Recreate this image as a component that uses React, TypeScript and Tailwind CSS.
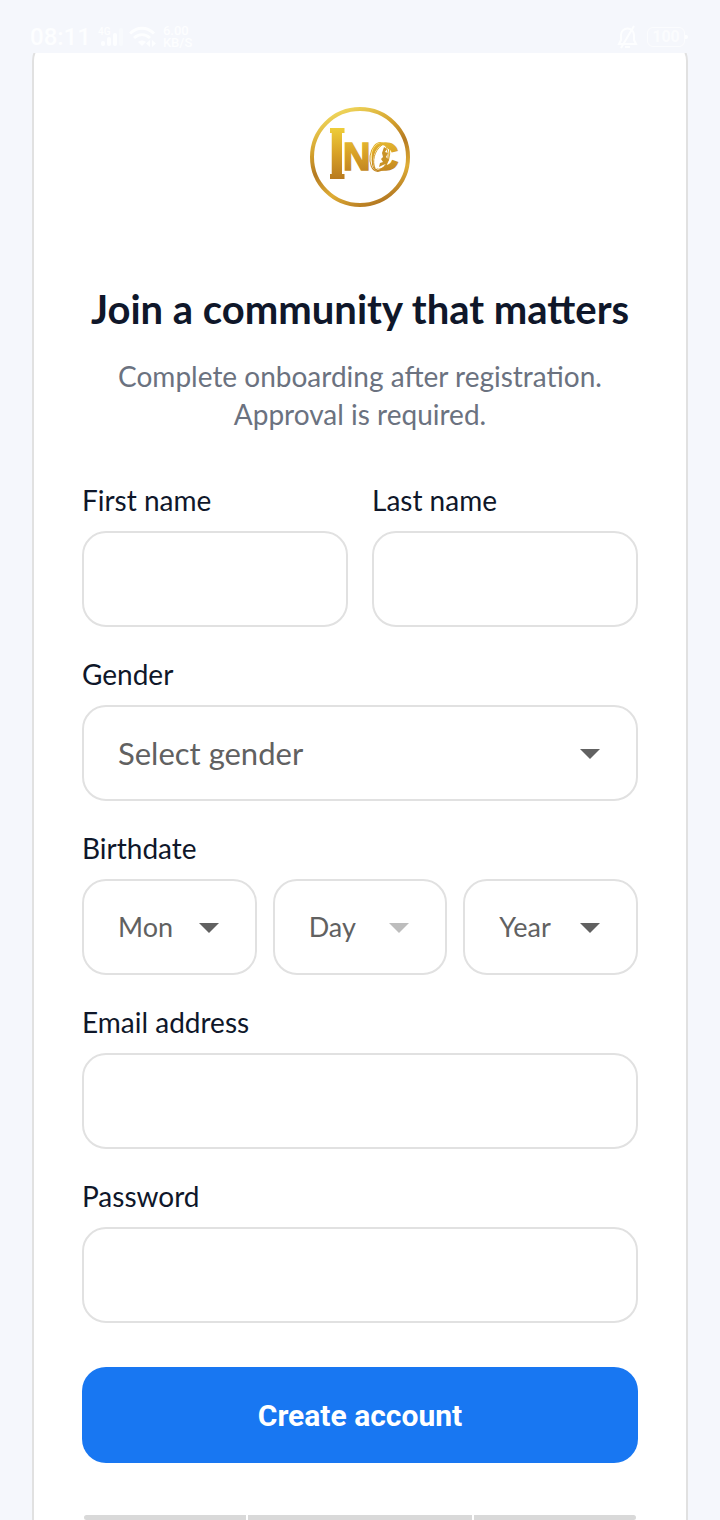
import { type ReactNode } from "react";
import clsx from "clsx";

const fieldStyles =
  "h-24 w-full rounded-3xl border-2 border-[#e1e1e1] bg-white px-[34px] text-[#616161] outline-none focus:border-[#1877f2]";

const months = ["Jan", "Feb", "Mar", "Apr", "May", "Jun", "Jul", "Aug", "Sep", "Oct", "Nov", "Dec"];
const years = ["2006", "2005", "2004", "2003", "2002", "2001", "2000"];

const StatusBar = () => {
  return (
    <header className="sticky top-0 z-10 flex h-[53px] items-end justify-between bg-[#f5f7fc] pr-8 pb-1 pl-[30px] font-[Roboto,sans-serif] text-[#fdfeff]">
      <div className="flex items-center gap-1.5">
        <span className="text-2xl leading-6 font-medium">08:11</span>
        <svg width="26" height="22" viewBox="0 0 26 22" fill="currentColor" aria-hidden="true">
          <text x="1" y="9" fontSize="10" fontWeight="500">
            4G
          </text>
          <rect x="4" y="15" width="4" height="5" rx="2" />
          <rect x="10" y="11" width="4" height="9" rx="2" />
          <rect x="16" y="7" width="4" height="13" rx="2" />
          <rect x="22" y="2" width="4" height="18" rx="2" opacity="0.4" />
        </svg>
        <svg width="28" height="22" viewBox="0 0 28 22" fill="none" stroke="currentColor" strokeWidth="3" aria-hidden="true">
          <path d="M1 7.500C8 .5 18 .5 25 7.500" />
          <path d="M5 12c5-4.500 11-4.500 16 0" />
          <path d="M9 16c3-2 5-2 8 0l-4 4z" fill="currentColor" stroke="none" />
          <path d="M21 14v7l-4-3.500zM23 14v7l4-3.500z" fill="currentColor" stroke="none" />
        </svg>
        <span className="text-[13px] leading-3 font-medium">
          6.00
          <br />
          KB/S
        </span>
      </div>
      <div className="flex items-center gap-2">
        <svg width="22" height="24" viewBox="0 0 22 24" fill="none" stroke="currentColor" strokeWidth="2" aria-hidden="true">
          <path d="M2 19h17l-2-4V10a6.500 6.500 0 0 0-13 0v5zM8 22h5M17 1 4 23" />
        </svg>
        <span className="flex items-center">
          <span className="flex h-5 w-[38px] items-center justify-center rounded-md border border-current text-base font-bold opacity-80">
            100
          </span>
          <span className="h-1 w-[3px] rounded-r bg-current" />
        </span>
      </div>
    </header>
  );
};

const Logo = () => {
  return (
    <svg
      className="mx-auto size-[100px]"
      viewBox="0 0 100 100"
      role="img"
      aria-label="INC"
      fontFamily="Liberation Sans, sans-serif"
      fontWeight="700"
    >
      <defs>
        <linearGradient id="ring" x1="0.3" y1="0" x2="0.7" y2="1">
          <stop offset="0" stopColor="#f0d75c" />
          <stop offset="0.3" stopColor="#d3a02c" />
          <stop offset="0.5" stopColor="#b57a22" />
          <stop offset="0.75" stopColor="#dfad35" />
          <stop offset="1" stopColor="#b07420" />
        </linearGradient>
        <linearGradient id="gold" gradientUnits="userSpaceOnUse" x1="0" y1="20" x2="0" y2="72">
          <stop offset="0" stopColor="#efcf3a" />
          <stop offset="0.5" stopColor="#d9a227" />
          <stop offset="1" stopColor="#b87a1e" />
        </linearGradient>
      </defs>
      <circle cx="50" cy="50" r="48" fill="#fff" stroke="url(#ring)" strokeWidth="4" />
      <g fill="url(#gold)">
        <text x="17" y="71" fontSize="71">
          I
        </text>
        <rect x="20" y="21" width="14.500" height="5" />
        <rect x="20" y="67" width="14.500" height="5" />
        <g stroke="url(#gold)" strokeWidth="1.500">
          <text x="33" y="63" fontSize="38">
            N
          </text>
          <text x="61" y="63" fontSize="38">
            C
          </text>
        </g>
      </g>
      <ellipse cx="71" cy="50" rx="7.500" ry="12" fill="#fff" transform="rotate(16 71 50)" />
      <g fill="none" stroke="url(#gold)" strokeWidth="1">
        <ellipse cx="69" cy="50" rx="9" ry="14.500" transform="rotate(8 69 50)" />
        <ellipse cx="71" cy="50" rx="8" ry="14" transform="rotate(18 71 50)" />
        <path d="M65 62c-3-8-1-18 7-24M65 62c6 3 12 1 16-4" />
      </g>
      <path
        d="m74 40 3 2-2 3 3 1-2 4 3 3-3 4-3 1-4 2 1-4 3-1-2-3 2-2-1-4z"
        fill="#c99225"
      />
    </svg>
  );
};

const Field = ({ id, label, children }: { id: string; label: string; children: ReactNode }) => {
  return (
    <div className="flex min-w-0 flex-col gap-3">
      <label htmlFor={id} className="text-[28px] leading-[38px] text-[#0f172a]">
        {label}
      </label>
      {children}
    </div>
  );
};

const Select = ({
  id,
  placeholder,
  options,
  label,
  disabled,
  className,
}: {
  id: string;
  placeholder: string;
  options: string[];
  label?: string;
  disabled?: boolean;
  className?: string;
}) => {
  return (
    <div className="relative">
      <select
        id={id}
        aria-label={label}
        disabled={disabled}
        defaultValue=""
        className={clsx(fieldStyles, "appearance-none opacity-100", className)}
      >
        <option value="">{placeholder}</option>
        {options.map((option) => (
          <option key={option}>{option}</option>
        ))}
      </select>
      <svg
        className={clsx(
          "pointer-events-none absolute top-11 right-[38px] h-[10px] w-5",
          disabled ? "text-[#bdbdbd]" : "text-[#616161]",
        )}
        viewBox="0 0 20 10"
        fill="currentColor"
        aria-hidden="true"
      >
        <path d="M0 0h20L10 10z" />
      </svg>
    </div>
  );
};

export default function App() {
  return (
    <div className="flex min-h-screen flex-col bg-[#f5f7fc] font-[Lato,sans-serif]">
      <StatusBar />
      <main className="mx-8 -mt-4 flex-1 rounded-t-3xl border-2 border-b-0 border-[#e1e1e1] bg-white px-12 pt-[68px]">
        <Logo />
        <h1 className="mt-[74px] text-center text-[40px] leading-[56px] font-bold text-[#0f172a]">
          Join a community that matters
        </h1>
        <p className="mt-5 text-center text-[28px] leading-[38px] text-[#6b7280]">
          Complete onboarding after registration. Approval is required.
        </p>
        <form className="mt-12 flex flex-col gap-7" onSubmit={(e) => e.preventDefault()}>
          <div className="grid grid-cols-2 gap-6">
            <Field id="first-name" label="First name">
              <input id="first-name" type="text" className={clsx(fieldStyles, "text-[31px]")} />
            </Field>
            <Field id="last-name" label="Last name">
              <input id="last-name" type="text" className={clsx(fieldStyles, "text-[31px]")} />
            </Field>
          </div>
          <Field id="gender" label="Gender">
            <Select id="gender" placeholder="Select gender" options={["Male", "Female"]} className="text-[31px]" />
          </Field>
          <Field id="month" label="Birthdate">
            <div className="grid grid-cols-3 gap-4">
              <Select id="month" placeholder="Mon" options={months} className="text-[27px]" />
              <Select id="day" label="Day" placeholder="Day" options={[]} disabled className="text-[27px]" />
              <Select id="year" label="Year" placeholder="Year" options={years} className="text-[27px]" />
            </div>
          </Field>
          <Field id="email" label="Email address">
            <input id="email" type="email" className={clsx(fieldStyles, "text-[31px]")} />
          </Field>
          <Field id="password" label="Password">
            <input id="password" type="password" className={clsx(fieldStyles, "text-[31px]")} />
          </Field>
          <button
            type="submit"
            className="mt-4 h-24 rounded-3xl bg-[#1877f2] font-[Roboto,sans-serif] text-[30px] font-bold text-white"
          >
            Create account
          </button>
        </form>
        <div className="mx-[2px] mt-[52px] flex h-[5px] gap-[2px] overflow-hidden rounded-sm">
          <div className="flex-[162] bg-[#d9d9d9]" />
          <div className="flex-[225] bg-[#d9d9d9]" />
          <div className="flex-[162] bg-[#d9d9d9]" />
        </div>
      </main>
    </div>
  );
}
